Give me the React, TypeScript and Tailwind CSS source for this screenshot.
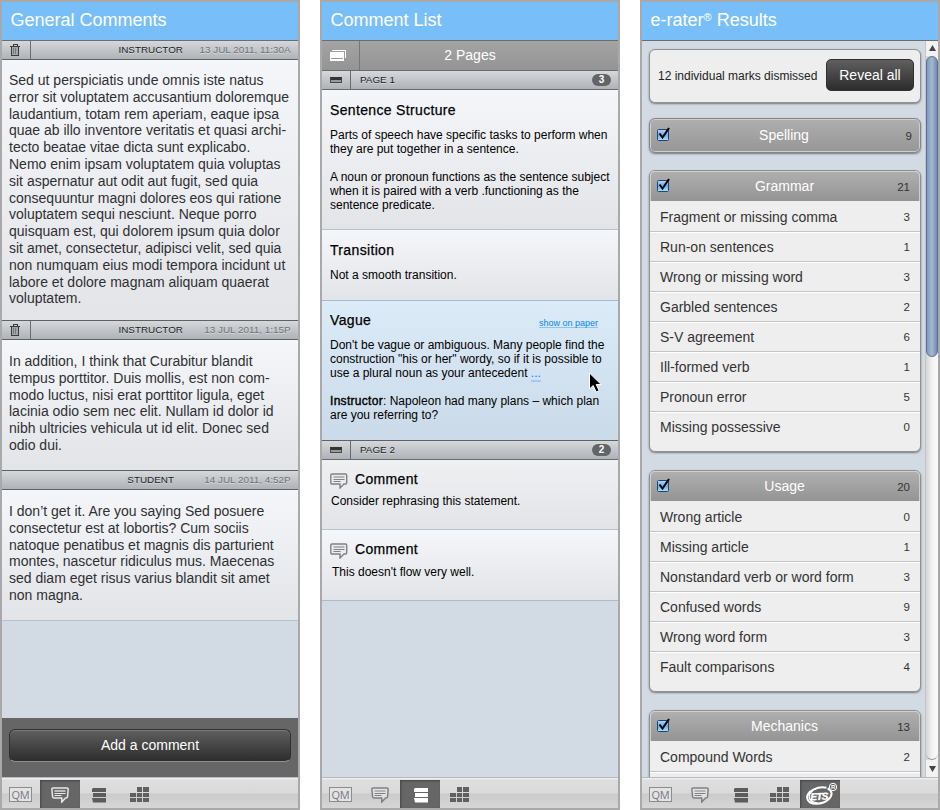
import React from "react";

const HELV = "font-['Liberation_Sans',Arial,sans-serif]";

function Panel({ title, children }: { title: React.ReactNode; children: React.ReactNode }) {
  return (
    <section className="flex h-[810px] w-[300px] flex-col overflow-hidden border-2 border-[#a9a9a9] bg-[#d2dae3]">
      <h1 className="h-[39px] shrink-0 border-b border-[#6d6d70] bg-[#78bffa] pl-[8.5px] text-[18px] leading-[37px] whitespace-nowrap text-white">
        {title}
      </h1>
      {children}
    </section>
  );
}

function Lines({ rows, className }: { rows: React.ReactNode[]; className: string }) {
  return (
    <div className={className}>
      {rows.map((r, i) => (
        <div key={i} className="whitespace-pre">
          {r || " "}
        </div>
      ))}
    </div>
  );
}

function Trash() {
  return (
    <svg width="10" height="12" viewBox="0 0 10 12" fill="none" shapeRendering="crispEdges">
      <path d="M2 3h6v8H2z" fill="#a4a7aa" />
      <path d="M0 2.5h10M3 2V.5h4V2M1.5 3v8.5h7V3" stroke="#3a3a3c" />
      <path d="M3.500 4v6M5.500 4v6" stroke="#77797c" />
    </svg>
  );
}

function Meta({ who, date, trash }: { who: string; date: string; trash?: boolean }) {
  return (
    <div className="flex h-[19px] shrink-0 items-center border-b border-[#5f6163] bg-linear-to-b from-[#d6d8da] to-[#aeb3b8] text-[9.9px] [text-shadow:0_1px_0_rgba(255,255,255,0.4)]">
      {trash && (
        <div className="flex h-full w-[29px] items-center border-r border-[#6b6d70] pl-[8px]">
          <Trash />
        </div>
      )}
      <span className={trash ? "w-[152px] text-right text-[#1c1c1e]" : "w-[172px] text-right text-[#1c1c1e]"}>{who}</span>
      <span className="ml-auto pr-[7.5px] text-[#707276]">{date}</span>
    </div>
  );
}

function Bubble({ light, left }: { light?: boolean; left?: boolean }) {
  const c = light ? "#e8e8e8" : "#808184";
  return (
    <svg width="18" height="16" viewBox="0 0 18 16" fill="none">
      {left ? (
        <path d="M2 1h13.500q1.200 0 1.200 1.200v7.600q0 1.200-1.200 1.200h-1.500l-4 4v-4H2q-1.200 0-1.200-1.200V2.200Q.800 1 2 1z" stroke={c} strokeWidth="1.400" fill="#ececee" />
      ) : (
        <path d="M2 1h14q1.200 0 1.200 1.200L16.500 9.800q-.2 1.200-1.400 1.200h-.6l-3.700 4v-4H3q-1.200 0-1.400-1.200L.9 2.200Q.8 1 2 1z" stroke={c} strokeWidth="1.500" fill={light ? "#686868" : "#e2e2e2"} />
      )}
      <path d="M3.500 4h11" stroke={light ? "#bdbdbd" : "#b3b4b6"} strokeWidth="2" />
      <path d="M3.500 6.500h11M3.500 8.500h7" stroke={c} />
    </svg>
  );
}

function Stack({ light }: { light?: boolean }) {
  const c = light ? "#ffffff" : "#5c5c5c";
  return (
    <svg width="14" height="15" viewBox="0 0 14 15" fill={c}>
      <path d="M1 0h13v4H0V1zM1 5h13v4H1zM0 10h14v4.500H1z" />
    </svg>
  );
}

function Blocks() {
  return (
    <svg width="19" height="16" viewBox="0 0 19 16" fill="#606060">
      <path d="M7 0h5v5H7zM13 0h6v5h-6zM0 6h6v4H0zM7 6h5v4H7zM13 6h6v4h-6zM0 11h6v4H0zM7 11h5v4H7zM13 11h6v4h-6z" />
    </svg>
  );
}

function Toolbar({ active }: { active: number }) {
  const on = "bg-[#666] shadow-[inset_1px_1px_2px_#444]";
  return (
    <div className="flex h-[31px] shrink-0 border-t border-[#b4b9c0] bg-[linear-gradient(#f4f4f4_0,#dedede_2px,#dadada_15px,#cbcbcb_16px,#d6d6d6_100%)] pt-[2px]">
      <div className="flex h-[28px] w-[38px] justify-end pt-[7px] pr-[8px]">
        <div className="h-[15px] w-[23px] border border-[#8c8c8c] bg-[#e3e3e3] text-center font-['Open_Sans',sans-serif] text-[11px] leading-[13px] tracking-[-0.3px] text-[#77797b]">
          QM
        </div>
      </div>
      <div className={`flex h-[28px] w-[40px] justify-center pt-[7px] ${active === 1 ? on : ""}`}>
        <Bubble light={active === 1} />
      </div>
      <div className={`flex h-[28px] w-[40px] pt-[8px] ${active === 1 ? "pl-[12px]" : "pl-[14px]"} ${active === 2 ? on : ""}`}>
        <Stack light={active === 2} />
      </div>
      <div className="flex h-[28px] w-[40px] pt-[7px] pl-[10px]">
        <Blocks />
      </div>
      {active === 4 && (
        <div className={`h-[28px] w-[40px] ${on}`}>
          <svg width="40" height="28" viewBox="0 0 40 28">
            <g transform="rotate(-12 19 16)" fill="none" stroke="#fff">
              <path d="M28 9.500C21 6 7 8.500 7 16c0 7.500 14 9.500 21 5 5-3 5-8 1-10.500" strokeWidth="2" />
              <path d="M14 9.500C6.500 13 8 20.500 16 22.500" strokeWidth="1.500" />
            </g>
            <text x="10.500" y="20" fontSize="10" fontStyle="italic" fontWeight="700" fontFamily="Liberation Sans, sans-serif" fill="#fff" stroke="#fff" strokeWidth=".4" letterSpacing="-.8" transform="rotate(-2 18 17)">
              ETS
            </text>
            <circle cx="33" cy="7" r="3.700" fill="#666" stroke="#fff" />
            <text x="30.900" y="9.200" fontSize="6" fontWeight="700" fontFamily="Liberation Sans, sans-serif" fill="#fff">
              R
            </text>
          </svg>
        </div>
      )}
    </div>
  );
}

function PageStrip({ label, count }: { label: string; count: number }) {
  return (
    <div className="flex h-[19px] shrink-0 items-center border-b border-[#6b6a70] bg-linear-to-b from-[#d6d8da] to-[#aeb3b8] text-[9.9px] text-[#1c1c1e] [text-shadow:0_1px_0_rgba(255,255,255,0.4)]">
      <div className="flex h-full w-[29px] items-center border-r border-[#6b6a70] pl-[8px]">
        <div className="h-[6px] w-[12px] border border-t-[3px] border-[#4a4a4a] border-t-[#333] bg-[#999]" />
      </div>
      <span className="pl-[9px]">{label}</span>
      <span className="mr-[7px] ml-auto h-[12px] w-[19px] rounded-full bg-[#636466] text-center text-[10px] leading-[12px] font-bold text-white [text-shadow:none]">
        {count}
      </span>
    </div>
  );
}

const FADE = "bg-linear-to-b from-[#f5f6f9] to-[#e3e4e8]";

function GeneralComments() {
  const body = "pl-[7px] text-[14px] leading-[16.8px] text-[#2f3032]";
  return (
    <Panel title="General Comments">
      <Meta who="INSTRUCTOR" date="13 JUL 2011, 11:30A" trash />
      <div className={`h-[261px] shrink-0 border-b border-[#5f6163] pt-[12px] ${FADE}`}>
        <Lines
          className={body}
          rows={[
            "Sed ut perspiciatis unde omnis iste natus",
            "error sit voluptatem accusantium doloremque",
            "laudantium, totam rem aperiam, eaque ipsa",
            "quae ab illo inventore veritatis et quasi archi-",
            "tecto beatae vitae dicta sunt explicabo.",
            "Nemo enim ipsam voluptatem quia voluptas",
            "sit aspernatur aut odit aut fugit, sed quia",
            "consequuntur magni dolores eos qui ratione",
            "voluptatem sequi nesciunt. Neque porro",
            "quisquam est, qui dolorem ipsum quia dolor",
            "sit amet, consectetur, adipisci velit, sed quia",
            "non numquam eius modi tempora incidunt ut",
            "labore et dolore magnam aliquam quaerat",
            "voluptatem.",
          ]}
        />
      </div>
      <Meta who="INSTRUCTOR" date="13 JUL 2011, 1:15P" trash />
      <div className={`h-[131px] shrink-0 border-b border-[#5f6163] pt-[13px] ${FADE}`}>
        <Lines
          className={body}
          rows={[
            "In addition, I think that Curabitur blandit",
            "tempus porttitor. Duis mollis, est non com-",
            "modo luctus, nisi erat porttitor ligula, eget",
            "lacinia odio sem nec elit. Nullam id dolor id",
            "nibh ultricies vehicula ut id elit. Donec sed",
            "odio dui.",
          ]}
        />
      </div>
      <Meta who="STUDENT" date="14 JUL 2011, 4:52P" />
      <div className={`h-[131px] shrink-0 border-b border-[#b4c3ce] pt-[13px] ${FADE}`}>
        <Lines
          className={body}
          rows={[
            "I don’t get it. Are you saying Sed posuere",
            "consectetur est at lobortis? Cum sociis",
            "natoque penatibus et magnis dis parturient",
            "montes, nascetur ridiculus mus. Maecenas",
            "sed diam eget risus varius blandit sit amet",
            "non magna.",
          ]}
        />
      </div>
      <div className="mt-auto h-[59px] shrink-0 bg-[#666] px-[7px] pt-[11px]">
        <button className="block h-[33px] w-full rounded-[6px] border border-[#303030] border-b-[#909090] bg-linear-to-b from-[#606060] to-[#2d2d2d] text-[14px] text-white shadow-[inset_0_1px_0_#7a7a7a]">
          Add a comment
        </button>
      </div>
      <Toolbar active={1} />
    </Panel>
  );
}

function CommentList() {
  const text = "text-[12px] leading-[14px] text-black";
  const head = "text-[14px] leading-[16px] tracking-[0.34px] text-black [-webkit-text-stroke:0.25px_black]";
  return (
    <Panel title="Comment List">
      <div className="flex h-[30px] shrink-0 border-b border-[#6b6a70] bg-linear-to-b from-[#a4a4a4] to-[#949494]">
        <div className="flex w-[38px] items-center border-r border-[#777] pl-[8px]">
          <svg width="16" height="11" viewBox="0 0 16 11">
            <path d="M2 .5h13.500V8" fill="none" stroke="#fff" />
            <path d="M0 2h14v9H0z" fill="#fff" />
            <path d="M1 8.500h12" stroke="#999" />
          </svg>
        </div>
        <div className="w-[220px] text-center text-[14px] leading-[29px] text-white">2 Pages</div>
      </div>
      <PageStrip label="PAGE 1" count={3} />
      <div className={`h-[140px] shrink-0 border-b border-[#b4c3ce] px-[8px] pt-[12px] ${FADE}`}>
        <h2 className={head}>Sentence Structure</h2>
        <Lines
          className={`pt-[10px] ${text}`}
          rows={[
            "Parts of speech have specific tasks to perform when",
            "they are put together in a sentence.",
            "",
            "A noun or pronoun functions as the sentence subject",
            "when it is paired with a verb .functioning as the",
            "sentence predicate.",
          ]}
        />
      </div>
      <div className={`h-[71px] shrink-0 border-b border-[#9fbcd4] px-[8px] pt-[12px] ${FADE}`}>
        <h2 className={head}>Transition</h2>
        <Lines className={`pt-[10px] ${text}`} rows={["Not a smooth transition."]} />
      </div>
      <div className="relative h-[140px] shrink-0 border-b border-[#5f6163] bg-linear-to-b from-[#dcebf8] to-[#cbdae9] px-[8px] pt-[11px]">
        <div className="flex justify-between pr-[12px]">
          <h2 className={head}>Vague</h2>
          <a className="mt-[6px] h-[10px] border-b border-[#8cc4f5] text-[9px] leading-[10px] text-[#0a84f0]">show on paper</a>
        </div>
        <Lines
          className={`pt-[10px] ${text}`}
          rows={[
            "Don't be vague or ambiguous. Many people find the",
            'construction "his or her" wordy, so if it is possible to',
            <>
              use a plural noun as your antecedent <span className="border-b-2 border-[#9ccbf3] text-[#0a84f0]">...</span>
            </>,
            "",
            <>
              <span className="tracking-[0.3px] [-webkit-text-stroke:0.4px_black]">Instructor</span>: Napoleon had many plans – which plan
            </>,
            "are you referring to?",
          ]}
        />
        <svg className="absolute top-[71px] left-[267px]" width="13" height="21" viewBox="0 0 13 21">
          <path d="M.5 1v16l3.700-3.500 3 6.500 3-1.300-3-6.200h5z" fill="#000" stroke="#fff" />
        </svg>
      </div>
      <PageStrip label="PAGE 2" count={2} />
      <div className="h-[70px] shrink-0 border-b border-[#b4c3ce] bg-linear-to-b from-[#eff0f2] to-[#e3e4e8] px-[8px] pt-[11px]">
        <div className="flex gap-[7px]">
          <div className="pt-[2px]">
            <Bubble left />
          </div>
          <h2 className={head}>Comment</h2>
        </div>
        <Lines className={`pt-[5px] pl-[1px] ${text}`} rows={["Consider rephrasing this statement."]} />
      </div>
      <div className={`h-[71px] shrink-0 border-b border-[#a9bccb] px-[8px] pt-[11px] ${FADE}`}>
        <div className="flex gap-[7px]">
          <div className="pt-[2px]">
            <Bubble left />
          </div>
          <h2 className={head}>Comment</h2>
        </div>
        <Lines className={`pt-[6px] pl-[2px] ${text}`} rows={["This doesn't flow very well."]} />
      </div>
      <div className="flex-1" />
      <Toolbar active={2} />
    </Panel>
  );
}

function Check() {
  return (
    <svg width="15" height="16" viewBox="0 0 15 16">
      <defs>
        <linearGradient id="box" x1="0" y1="0" x2="0" y2="1">
          <stop offset="0" stopColor="#b5d8f8" />
          <stop offset=".5" stopColor="#63adf0" />
          <stop offset="1" stopColor="#a5e6ff" />
        </linearGradient>
      </defs>
      <rect x="1.500" y="3.500" width="11" height="11" rx="1" fill="url(#box)" stroke="#25446c" />
      <path d="M3.500 7.500l3 4L13 2" fill="none" stroke="#000" strokeWidth="2" />
    </svg>
  );
}

const CARD = "shrink-0 overflow-hidden rounded-[6px] border border-[#909090] shadow-[0_1px_2px_rgba(60,60,60,0.6)]";

function CardHead({ title, count }: { title: string; count: number }) {
  return (
    <div className="flex h-[30px] items-center rounded-t-[5px] border border-b-0 border-[#cfcfcf] bg-linear-to-b from-[#afafaf] to-[#949494] pr-[9px] pb-[1px] pl-[5px]">
      <div className="-mt-[2px] w-[25px]">
        <Check />
      </div>
      <span className="w-[207px] text-center text-[14px] text-white">{title}</span>
      <span className="mt-[3px] ml-auto text-[11.500px] text-[#333]">{count}</span>
    </div>
  );
}

function Group({ title, count, rows, open }: { title: string; count: number; rows: [string, number][]; open?: boolean }) {
  return (
    <div className={`${CARD} mb-[18px] bg-[#eee] ${open ? "pb-[30px]" : "pb-[9px]"}`}>
      <CardHead title={title} count={count} />
      <div className="pt-[1px]">
        {rows.map(([name, n], i) => (
          <div
            key={i}
            className={`flex h-[30px] items-center justify-between border-b px-[10px] pt-[1px] text-[14px] text-[#333] ${
              i < rows.length - 1 || open ? "border-[#c4c4c4] shadow-[0_1px_0_#fff]" : "border-transparent"
            }`}
          >
            <span>{name}</span>
            <span className="mt-[2px] text-[11.500px]">{n}</span>
          </div>
        ))}
      </div>
    </div>
  );
}

function Results() {
  return (
    <Panel
      title={
        <>
          e-rater<span className="relative -top-[5px] text-[11px]">®</span> Results
        </>
      }
    >
      <div className="flex min-h-0 flex-1">
        <div className="flex w-[283px] flex-col overflow-hidden pt-[8px] pr-[4px] pl-[7px]">
          <div className={`${CARD} mb-[15px] flex h-[54px] items-center justify-between border-[#8f8f8f] bg-[#eee] pr-[6px] pl-[8px]`}>
            <span className="text-[12px] text-[#222]">12 individual marks dismissed</span>
            <button className="mb-[2px] h-[32px] w-[88px] rounded-[5px] border border-[#303030] bg-linear-to-b from-[#606060] to-[#2d2d2d] text-[14px] text-white">
              Reveal all
            </button>
          </div>
          <div className="mb-[17px] flex h-[35px] shrink-0 items-center rounded-[6px] border border-[#858585] bg-linear-to-b from-[#afafaf] to-[#969696] pr-[8px] pl-[6px] shadow-[inset_0_0_0_1px_#cecece,0_1px_2px_rgba(60,60,60,0.6)]">
            <div className="-mt-[3px] w-[25px]">
              <Check />
            </div>
            <span className="w-[206px] text-center text-[14px] text-white">Spelling</span>
            <span className="mt-[2px] ml-auto text-[11.500px] text-[#333]">9</span>
          </div>
          <Group
            title="Grammar"
            count={21}
            rows={[
              ["Fragment or missing comma", 3],
              ["Run-on sentences", 1],
              ["Wrong or missing word", 3],
              ["Garbled sentences", 2],
              ["S-V agreement", 6],
              ["Ill-formed verb", 1],
              ["Pronoun error", 5],
              ["Missing possessive", 0],
            ]}
          />
          <Group
            title="Usage"
            count={20}
            rows={[
              ["Wrong article", 0],
              ["Missing article", 1],
              ["Nonstandard verb or word form", 3],
              ["Confused words", 9],
              ["Wrong word form", 3],
              ["Fault comparisons", 4],
            ]}
          />
          <Group title="Mechanics" count={13} open rows={[["Compound Words", 2]]} />
        </div>
        <div className="flex w-[13px] flex-col border-l border-[#c4c4c4] bg-linear-to-r from-[#d4d4d4] via-[#f2f2f2] to-[#fafafa]">
          <div className="flex h-[15px] justify-center bg-[#f2f2f2] pt-[4px]">
            <svg width="7" height="6" viewBox="0 0 7 6">
              <path d="M3.500 0L7 6H0z" fill="#444" />
            </svg>
          </div>
          <div className="h-[301px] rounded-[6px] border border-[#5c718f] bg-linear-to-r from-[#8199bb] via-[#a3b8d2] to-[#6f8bb0]" />
          <div className="flex-1 rounded-b-[7px] border-b border-[#999]" />
          <div className="flex h-[17px] justify-center bg-[#f2f2f2] pt-[6px]">
            <svg width="7" height="6" viewBox="0 0 7 6">
              <path d="M3.500 6L7 0H0z" fill="#444" />
            </svg>
          </div>
        </div>
      </div>
      <Toolbar active={4} />
    </Panel>
  );
}

export default function App() {
  return (
    <main className={`flex h-[810px] w-[940px] gap-[20px] overflow-hidden bg-white ${HELV}`}>
      <GeneralComments />
      <CommentList />
      <Results />
    </main>
  );
}
